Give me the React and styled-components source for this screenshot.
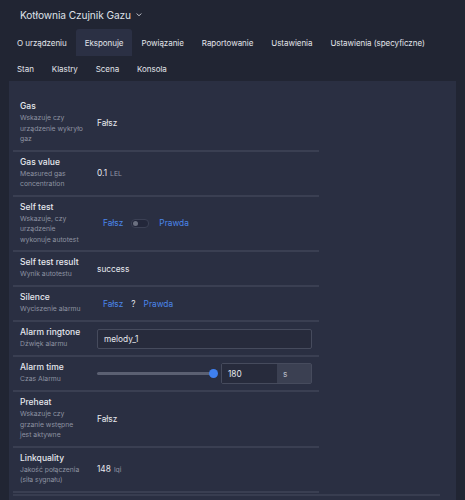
import React from 'react';
import styled, { createGlobalStyle } from 'styled-components';

const GlobalStyle = createGlobalStyle`
  html, body {
    margin: 0;
    padding: 0;
    background: #212533;
  }
  body {
    font-family: Inter, "Noto Sans", "Liberation Sans", sans-serif;
    color: #e4e6ec;
    -webkit-font-smoothing: antialiased;
  }
`;

const Page = styled.div`
  width: 465px;
  height: 500px;
  overflow: hidden;
  background: #212533;
`;

const Header = styled.div`
  display: flex;
  align-items: center;
  gap: 5px;
  padding: 6px 0 0 20px;
  height: 18px;
  font-size: 10.2px;
  letter-spacing: -0.1px;
  color: #dfe1e8;
`;

const Tabs = styled.div`
  display: flex;
  flex-wrap: wrap;
  padding: 5px 0 0 8px;
  width: 456px;
  box-sizing: border-box;
`;

const Tab = styled.div`
  font-size: 8px;
  letter-spacing: -0.05px;
  color: #e2e4ea;
  padding: 0 9px;
  height: ${(p) => (p.$short ? 25 : 27)}px;
  display: flex;
  align-items: center;
  border-radius: 3px 3px 0 0;
  background: ${(p) => (p.$active ? '#2b3044' : 'transparent')};
`;

const Panel = styled.div`
  margin: 0 9px 0 9px;
  background: #2a2f42;
  padding: 15px 4px 0 4px;
  height: 420px;
`;

const Table = styled.div`
  width: 306px;
`;

const Row = styled.div`
  display: flex;
  align-items: center;
  border-bottom: 2px solid #3a3f52;
  min-height: 33px;
`;

const LabelCell = styled.div`
  width: 66px;
  padding: 4px 7px 5px 7px;
  flex-shrink: 0;
`;

const Title = styled.div`
  font-size: 8.5px;
  line-height: 13px;
  color: #e6e8ee;
  font-weight: 500;
  white-space: nowrap;
`;

const Desc = styled.div`
  font-size: 6.8px;
  line-height: 10.5px;
  color: #8d92a1;
  white-space: nowrap;
`;

const ValueCell = styled.div`
  flex: 1;
  display: flex;
  align-items: center;
  padding: 0 7px 0 ${(p) => p.$indent || 4}px;
  font-size: 8.3px;
  color: #e6e8ee;
  gap: ${(p) => p.$gap || 0}px;
`;

const Unit = styled.span`
  font-size: 6.8px;
  color: #9297a6;
  margin-left: 3px;
`;

const Link = styled.span`
  color: #4a86ea;
  font-size: 8.3px;
`;

const Toggle = styled.span`
  width: 16px;
  height: 7px;
  border-radius: 4px;
  background: #23273a;
  border: 1px solid #3b4054;
  position: relative;
  margin-right: 2px;
  &::after {
    content: '';
    position: absolute;
    left: 1px;
    top: 1px;
    width: 5px;
    height: 5px;
    border-radius: 50%;
    background: #6b7080;
  }
`;

const TextInput = styled.div`
  flex: 1;
  height: 18px;
  border: 1px solid #464b5d;
  border-radius: 2px;
  background: #272b3c;
  display: flex;
  align-items: center;
  padding-left: 6px;
  font-size: 8.3px;
  color: #e6e8ee;
`;

const Slider = styled.div`
  width: 118px;
  height: 3px;
  border-radius: 2px;
  background: #5b6072;
  position: relative;
  margin-right: 6px;
`;

const Knob = styled.span`
  position: absolute;
  right: -3px;
  top: -3px;
  width: 9px;
  height: 9px;
  border-radius: 50%;
  background: #3f80f0;
`;

const NumberGroup = styled.div`
  display: flex;
  flex: 1;
  height: 19px;
  border: 1px solid #464b5d;
  border-radius: 2px;
`;

const NumberField = styled.div`
  width: 49px;
  padding-left: 6px;
  display: flex;
  align-items: center;
  background: #272b3c;
  font-size: 8.3px;
`;

const Addon = styled.div`
  flex: 1;
  background: #3b4052;
  display: flex;
  align-items: center;
  padding-left: 6px;
  font-size: 8.3px;
  color: #b9bcc7;
`;

const FooterLine = styled.div`
  width: 427px;
  height: 2px;
  margin-top: 1px;
  background: #383d50;
`;

const Chevron = () => (
  <svg width="6" height="4" viewBox="0 0 7 5" fill="none">
    <path d="M1 1l2.5 2.5L6 1" stroke="#cfd2da" strokeWidth="1.2" strokeLinecap="round" strokeLinejoin="round" />
  </svg>
);

const Label = ({ title, lines }) => (
  <LabelCell>
    <Title>{title}</Title>
    {lines.map((l) => (
      <Desc key={l}>{l}</Desc>
    ))}
  </LabelCell>
);

export default function App() {
  return (
    <Page>
      <GlobalStyle />
      <Header>
        Kotłownia Czujnik Gazu <Chevron />
      </Header>
      <Tabs>
        <Tab>O urządzeniu</Tab>
        <Tab $active>Eksponuje</Tab>
        <Tab>Powiązanie</Tab>
        <Tab>Raportowanie</Tab>
        <Tab>Ustawienia</Tab>
        <Tab>Ustawienia (specyficzne)</Tab>
        <Tab $short>Stan</Tab>
        <Tab $short>Klastry</Tab>
        <Tab $short>Scena</Tab>
        <Tab $short>Konsola</Tab>
      </Tabs>
      <Panel>
        <Table>
          <Row>
            <Label title="Gas" lines={['Wskazuje czy', 'urządzenie wykryło', 'gaz']} />
            <ValueCell>Fałsz</ValueCell>
          </Row>
          <Row>
            <Label title="Gas value" lines={['Measured gas', 'concentration']} />
            <ValueCell>
              0.1<Unit>LEL</Unit>
            </ValueCell>
          </Row>
          <Row>
            <Label title="Self test" lines={['Wskazuje, czy', 'urządzenie', 'wykonuje autotest']} />
            <ValueCell $indent={10} $gap={8}>
              <Link>Fałsz</Link>
              <Toggle />
              <Link>Prawda</Link>
            </ValueCell>
          </Row>
          <Row>
            <Label title="Self test result" lines={['Wynik autotestu']} />
            <ValueCell>success</ValueCell>
          </Row>
          <Row>
            <Label title="Silence" lines={['Wyciszenie alarmu']} />
            <ValueCell $indent={10} $gap={8}>
              <Link>Fałsz</Link>
              <span>?</span>
              <Link>Prawda</Link>
            </ValueCell>
          </Row>
          <Row>
            <Label title="Alarm ringtone" lines={['Dźwięk alarmu']} />
            <ValueCell>
              <TextInput>melody_1</TextInput>
            </ValueCell>
          </Row>
          <Row>
            <Label title="Alarm time" lines={['Czas Alarmu']} />
            <ValueCell>
              <Slider>
                <Knob />
              </Slider>
              <NumberGroup>
                <NumberField>180</NumberField>
                <Addon>s</Addon>
              </NumberGroup>
            </ValueCell>
          </Row>
          <Row>
            <Label title="Preheat" lines={['Wskazuje czy', 'grzanie wstępne', 'jest aktywne']} />
            <ValueCell>Fałsz</ValueCell>
          </Row>
          <Row>
            <Label title="Linkquality" lines={['Jakość połączenia', '(siła sygnału)']} />
            <ValueCell>
              148<Unit>lqi</Unit>
            </ValueCell>
          </Row>
        </Table>
        <FooterLine />
      </Panel>
    </Page>
  );
}
